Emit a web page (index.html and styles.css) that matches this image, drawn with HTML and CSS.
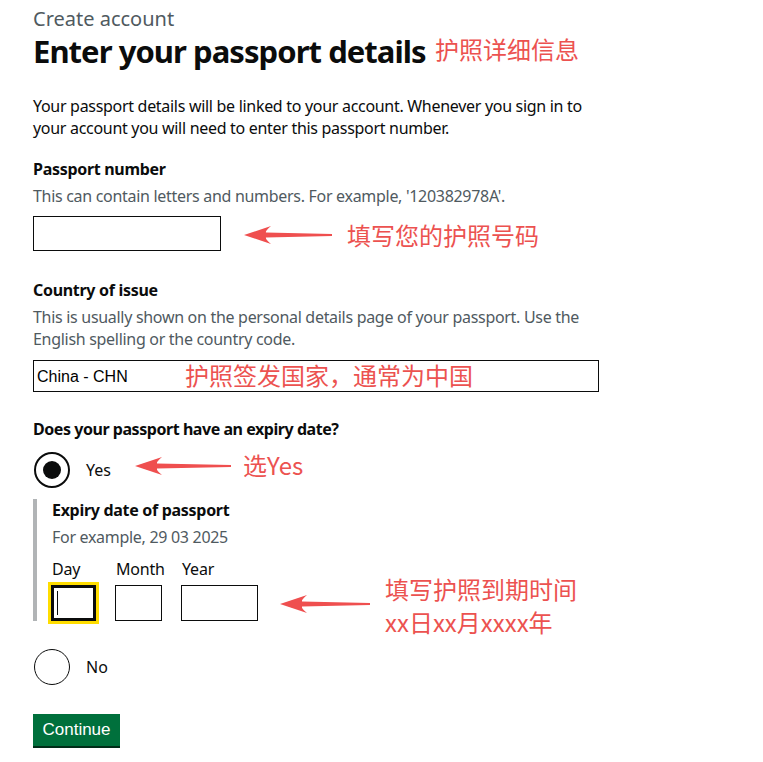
FILE: index.html
```html
<!DOCTYPE html>
<html lang="en">
<head>
    <meta charset="UTF-8">
    <title>Enter your passport details</title>
    <link rel="stylesheet" href="styles.css">
</head>
<body>
    <main class="page">
        <span class="caption">Create account</span>
        <h1 class="heading">Enter your passport details</h1>
        <p class="body-text">Your passport details will be linked to your account. Whenever you sign in to your account you will need to enter this passport number.</p>

        <!-- passport number -->
        <div class="form-group">
            <label class="label" for="passport-number">Passport number</label>
            <div class="hint">This can contain letters and numbers. For example, '120382978A'.</div>
            <input class="input input-passport" id="passport-number" type="text">
        </div>

        <!-- country -->
        <div class="form-group">
            <label class="label" for="country">Country of issue</label>
            <div class="hint hint-wide">This is usually shown on the personal details page of your passport. Use the English spelling or the country code.</div>
            <input class="input input-country" id="country" type="text" value="China - CHN">
        </div>

        <!-- expiry -->
        <fieldset class="fieldset">
            <legend class="label label-question">Does your passport have an expiry date?</legend>
            <div class="radio-item">
                <span class="radio radio-checked"></span>
                <span class="radio-label">Yes</span>
            </div>
            <div class="conditional">
                <div class="label">Expiry date of passport</div>
                <div class="hint">For example, 29 03 2025</div>
                <div class="date-row">
                    <div class="date-item">
                        <label class="date-label">Day</label>
                        <span class="date-wrap">
                            <input class="input date-input date-focus" type="text">
                            <span class="caret"></span>
                        </span>
                    </div>
                    <div class="date-item">
                        <label class="date-label">Month</label>
                        <input class="input date-input" type="text">
                    </div>
                    <div class="date-item">
                        <label class="date-label">Year</label>
                        <input class="input date-input" type="text">
                    </div>
                </div>
            </div>
            <div class="radio-item radio-item-no">
                <span class="radio"></span>
                <span class="radio-label">No</span>
            </div>
        </fieldset>

        <button class="button">Continue</button>

        <!-- annotations -->
        <span class="note note-title">护照详细信息</span>

        <svg class="arrow arrow-passport" width="88" height="20" viewBox="0 0 88 20"><path d="M0 10 L27 1 Q21 6 22 7.5 L88 9 L88 11 L22 12.5 Q21 14 27 19 Z" fill="#ef4f4f"/></svg>
        <span class="note note-passport">填写您的护照号码</span>

        <span class="note note-country">护照签发国家，通常为中国</span>

        <svg class="arrow arrow-yes" width="96" height="20" viewBox="0 0 96 20"><path d="M0 10 L27 1 Q21 6 22 7.5 L96 9 L96 11 L22 12.5 Q21 14 27 19 Z" fill="#ef4f4f"/></svg>
        <span class="note note-yes">选Yes</span>

        <svg class="arrow arrow-date" width="90" height="20" viewBox="0 0 90 20"><path d="M0 10 L27 1 Q21 6 22 7.5 L90 9 L90 11 L22 12.5 Q21 14 27 19 Z" fill="#ef4f4f"/></svg>
        <span class="note note-date">填写护照到期时间<br>xx日xx月xxxx年</span>
    </main>
</body>
</html>
```

FILE: styles.css
```css
/* base */
body {
    margin: 0;
    background: #fff;
    color: #0b0c0c;
    font-family: "Noto Sans", Arial, sans-serif;
}

.page {
    position: relative;
    padding: 7px 33px 20px;
    display: flex;
    flex-direction: column;
    align-items: flex-start;
}

.caption {
    font-size: 20px;
    line-height: 24px;
    color: #505a5f;
}
.heading {
    margin: 3px 0 0;
    font-size: 31px;
    line-height: 34px;
    font-weight: 700;
    letter-spacing: -0.95px;
}
.body-text {
    margin: 27px 0 0;
    font-size: 16px;
    line-height: 22px;
    max-width: 560px;
    letter-spacing: -0.3px;
}

/* form */
.form-group {
    display: flex;
    flex-direction: column;
    align-items: flex-start;
    margin-top: 19px;
}
.form-group + .form-group {
    margin-top: 28px;
}
.label {
    display: block;
    font-size: 16px;
    line-height: 22px;
    font-weight: 700;
    letter-spacing: -0.3px;
    padding: 0;
}
.label-question {
    letter-spacing: -0.45px;
}
.hint {
    margin-top: 5px;
    font-size: 16px;
    line-height: 22px;
    color: #505a5f;
    letter-spacing: -0.3px;
}
.hint-wide {
    max-width: 555px;
}
.input {
    box-sizing: border-box;
    margin: 0;
    border: 1px solid #0b0c0c;
    border-radius: 0;
    background: #fff;
    font-family: "Liberation Sans", Arial, sans-serif;
    font-size: 16px;
    color: #000;
    outline: none;
}
.input-passport {
    margin-top: 9px;
    width: 188px;
    height: 35px;
}
.input-country {
    margin-top: 10px;
    width: 566px;
    height: 32px;
    padding: 2px 3px 0;
}

/* radios */
.fieldset {
    margin: 26px 0 0;
    padding: 0;
    border: none;
    min-width: 0;
}
.fieldset legend {
    padding: 0;
}
.radio-item {
    display: flex;
    align-items: center;
    margin-top: 12px;
}
.radio-item-no {
    margin-top: 28px;
}
.radio {
    box-sizing: border-box;
    width: 36px;
    height: 36px;
    margin-left: 1px;
    border: 1.5px solid #0b0c0c;
    border-radius: 50%;
    display: flex;
    align-items: center;
    justify-content: center;
}
.radio-checked {
    border-width: 2px;
}
.radio-checked::after {
    content: "";
    width: 18px;
    height: 18px;
    border-radius: 50%;
    background: #0b0c0c;
}
.radio-label {
    margin-left: 16px;
    font-size: 16px;
    line-height: 22px;
}

/* conditional reveal */
.conditional {
    margin-top: 11px;
    border-left: 4px solid #b1b4b6;
    padding-left: 14px;
}
.conditional .label {
    margin-left: 1px;
}
.conditional .hint {
    margin-left: 1px;
}
.date-row {
    display: grid;
    grid-template-columns: 45px 47px 77px;
    column-gap: 19px;
    margin-top: 10px;
}
.date-item {
    display: flex;
    flex-direction: column;
    align-items: flex-start;
    min-width: 0;
}
.date-label {
    font-size: 16px;
    line-height: 22px;
    margin-left: 1px;
    margin-bottom: 5px;
    white-space: nowrap;
    letter-spacing: -0.2px;
}
.date-wrap {
    position: relative;
    display: block;
    width: 100%;
}
.date-input {
    display: block;
    width: 100%;
    height: 36px;
}
.date-focus {
    border: 3px solid #0b0c0c;
    outline: 3px solid #fd0;
}
.caret {
    position: absolute;
    left: 6px;
    top: 6px;
    width: 1px;
    height: 24px;
    background: #0b0c0c;
}

/* button */
.button {
    margin-top: 29px;
    width: 87px;
    height: 32px;
    padding: 0;
    border: none;
    border-radius: 0;
    background: #00703c;
    box-shadow: 0 2px 0 #002d18;
    color: #fff;
    font-family: "Liberation Sans", Arial, sans-serif;
    font-size: 17px;
    line-height: 32px;
    cursor: pointer;
}

/* red annotations on top */
.note {
    position: absolute;
    color: #ec5250;
    font-family: "Noto Sans CJK SC", "Noto Sans", sans-serif;
    font-size: 24px;
    line-height: 33px;
    white-space: nowrap;
}
.arrow {
    position: absolute;
}
.note-title {
    left: 435px;
    top: 32px;
}
.arrow-passport {
    left: 244px;
    top: 225px;
}
.note-passport {
    left: 347px;
    top: 218px;
}
.note-country {
    left: 185px;
    top: 358px;
}
.arrow-yes {
    left: 135px;
    top: 456px;
}
.note-yes {
    left: 243px;
    top: 448px;
}
.arrow-date {
    left: 280px;
    top: 594px;
}
.note-date {
    left: 385px;
    top: 572px;
}
```
